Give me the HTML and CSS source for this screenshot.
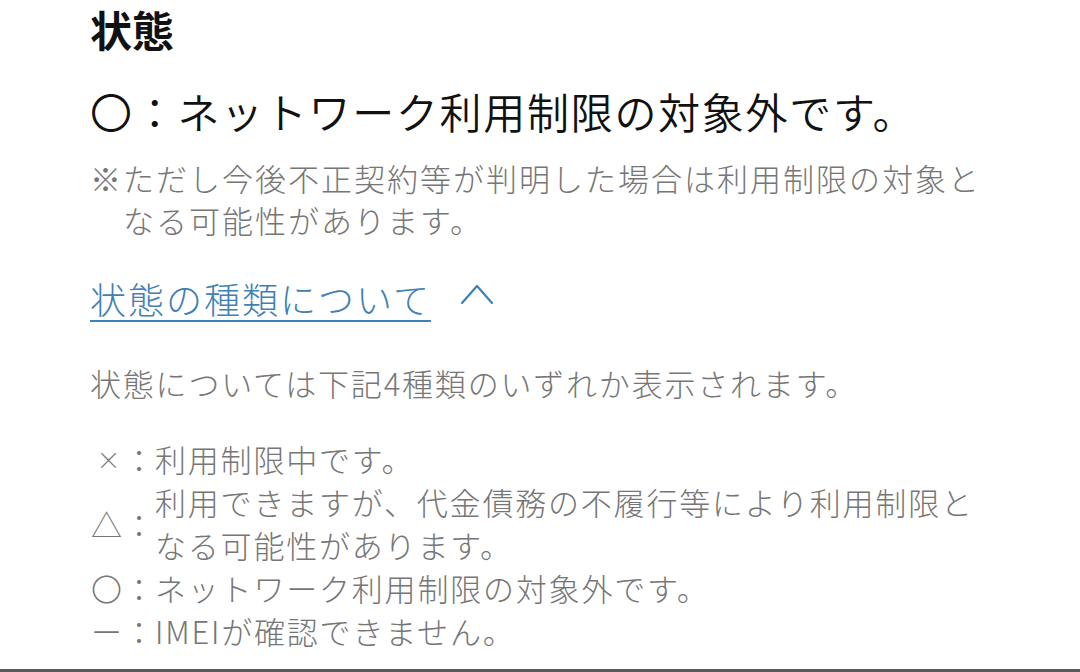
FILE: index.html
```html
<!DOCTYPE html>
<html lang="ja">
<head>
<meta charset="utf-8">
<title>状態</title>
<link rel="stylesheet" href="styles.css">
</head>
<body>
<main class="content">
  <h1 class="title">状態</h1>
  <p class="status">〇：ネットワーク利用制限の対象外です。</p>
  <p class="note">※ただし今後不正契約等が判明した場合は利用制限の対象と<br>なる可能性があります。</p>
  <div class="toggle">
    <a class="toggle-link" href="#">状態の種類について</a>
    <svg class="chevron" width="34" height="22" viewBox="0 0 34 22" aria-hidden="true"><polyline points="2,20 17,3 32,20" fill="none" stroke="#3f80b6" stroke-width="2.2" stroke-linecap="round" stroke-linejoin="round"/></svg>
  </div>
  <p class="desc">状態については下記4種類のいずれか表示されます。</p>
  <ul class="legend">
    <li class="row"><span class="mark mark-x">×</span><span class="colon">：</span><span class="text">利用制限中です。</span></li>
    <li class="row"><span class="mark">△</span><span class="colon">：</span><span class="text">利用できますが、代金債務の不履行等により利用制限と<br>なる可能性があります。</span></li>
    <li class="row"><span class="mark">〇</span><span class="colon">：</span><span class="text">ネットワーク利用制限の対象外です。</span></li>
    <li class="row"><span class="mark">ー</span><span class="colon">：</span><span class="text">IMEIが確認できません。</span></li>
  </ul>
</main>
<div class="bottom-rule"></div>
</body>
</html>
```
FILE: styles.css
```css
html, body {
  margin: 0;
  padding: 0;
  background: #ffffff;
}
body {
  width: 1080px;
  height: 672px;
  overflow: hidden;
  font-family: "Noto Sans CJK JP", "Noto Sans", sans-serif;
}
.content {
  padding-left: 90px;
}
.title {
  margin: 0;
  font-size: 42px;
  line-height: 58px;
  font-weight: 700;
  color: #111111;
  letter-spacing: 0;
}
.status {
  margin: 25px 0 0;
  font-size: 42px;
  line-height: 56px;
  font-weight: 350;
  color: #111111;
  letter-spacing: 1.7px;
}
.note {
  margin: 18px 0 0;
  font-size: 31px;
  line-height: 42px;
  font-weight: 300;
  color: #767676;
  letter-spacing: 2px;
  padding-left: 33px;
  text-indent: -33px;
}
.toggle {
  margin-top: 32px;
  height: 50px;
  display: flex;
  align-items: center;
  gap: 29px;
}
.toggle-link {
  font-size: 36px;
  line-height: 50px;
  font-weight: 300;
  color: #3f80b6;
  letter-spacing: 2px;
  text-decoration: underline;
  text-decoration-thickness: 2px;
  text-underline-offset: 6px;
}
.chevron {
  display: block;
  margin-top: -8px;
}
.desc {
  margin: 39px 0 0;
  font-size: 31px;
  line-height: 42px;
  font-weight: 300;
  color: #767676;
  letter-spacing: 1.8px;
}
.legend {
  list-style: none;
  margin: 33px 0 0;
  padding: 0;
}
.row {
  display: grid;
  grid-template-columns: 33px 32px 1fr;
  align-items: center;
  font-size: 31px;
  line-height: 43px;
  font-weight: 300;
  color: #767676;
}
.mark, .colon {
  text-align: center;
}
.mark-x {
  font-size: 24px;
  padding-left: 4px;
}
.text {
  letter-spacing: 1.8px;
}
.bottom-rule {
  margin-top: 17px;
  height: 3px;
  background: #5a5a5a;
}
```
